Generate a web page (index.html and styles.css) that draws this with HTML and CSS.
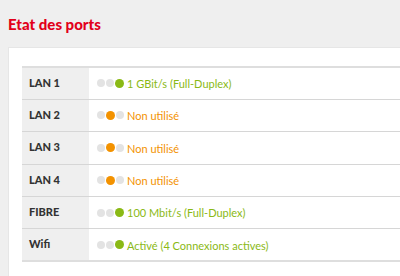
FILE: index.html
```html
<!DOCTYPE html>
<html lang="fr">
<head>
    <meta charset="UTF-8">
    <title>Etat des ports</title>
    <link rel="stylesheet" href="styles.css">
</head>
<body>
    <h2 class="title">Etat des ports</h2>
    <div class="panel">
        <table class="ports">
            <tr>
                <th>LAN 1</th>
                <td><span class="leds"><i></i><i></i><i class="on up"></i></span><span class="state up">1 GBit/s (Full-Duplex)</span></td>
            </tr>
            <tr>
                <th>LAN 2</th>
                <td><span class="leds"><i></i><i class="on off"></i><i></i></span><span class="state off">Non utilisé</span></td>
            </tr>
            <tr>
                <th>LAN 3</th>
                <td><span class="leds"><i></i><i class="on off"></i><i></i></span><span class="state off">Non utilisé</span></td>
            </tr>
            <tr>
                <th>LAN 4</th>
                <td><span class="leds"><i></i><i class="on off"></i><i></i></span><span class="state off">Non utilisé</span></td>
            </tr>
            <tr>
                <th>FIBRE</th>
                <td><span class="leds"><i></i><i></i><i class="on up"></i></span><span class="state up">100 Mbit/s (Full-Duplex)</span></td>
            </tr>
            <tr>
                <th>Wifi</th>
                <td><span class="leds"><i></i><i></i><i class="on up"></i></span><span class="state up">Activé (4 Connexions actives)</span></td>
            </tr>
        </table>
    </div>
</body>
</html>
```
FILE: styles.css
```css
body {
    margin: 0;
    padding: 0 0 0 8px;
    background: #efefef;
    font-family: Lato, sans-serif;
    overflow: hidden;
}
.title {
    margin: 0;
    padding-top: 15px;
    height: 47px;
    box-sizing: border-box;
    color: #e2001a;
    font-size: 15px;
    font-weight: 900;
}
.panel {
    width: 500px;
    background: #fff;
    border: 1px solid #e6e6e6;
    padding: 18px 0 20px 13px;
}
.ports {
    width: 100%;
    border-collapse: collapse;
    border-top: 2px solid #dedede;
    border-bottom: 2px solid #dedede;
}
.ports tr {
    height: 32.4px;
    border-bottom: 1px solid #d6d6d6;
}
.ports th {
    width: 60px;
    padding: 0 0 2px 7px;
    background: #efefef;
    text-align: left;
    font-size: 11px;
    font-weight: 900;
    color: #333;
}
.ports td {
    padding: 0 0 2px 8px;
    font-size: 11px;
}
.leds {
    display: inline-flex;
    align-items: center;
    gap: 1px;
    margin-right: 3px;
    vertical-align: middle;
}
.leds i {
    width: 8px;
    height: 8px;
    border-radius: 50%;
    background: #e3e3e3;
}
.leds i.on {
    width: 9px;
    height: 9px;
}
.up {
    color: #8ab915;
}
.off {
    color: #f39200;
}
.leds i.up {
    background: #8ab915;
}
.leds i.off {
    background: #f39200;
}
.state {
    vertical-align: middle;
}
```
